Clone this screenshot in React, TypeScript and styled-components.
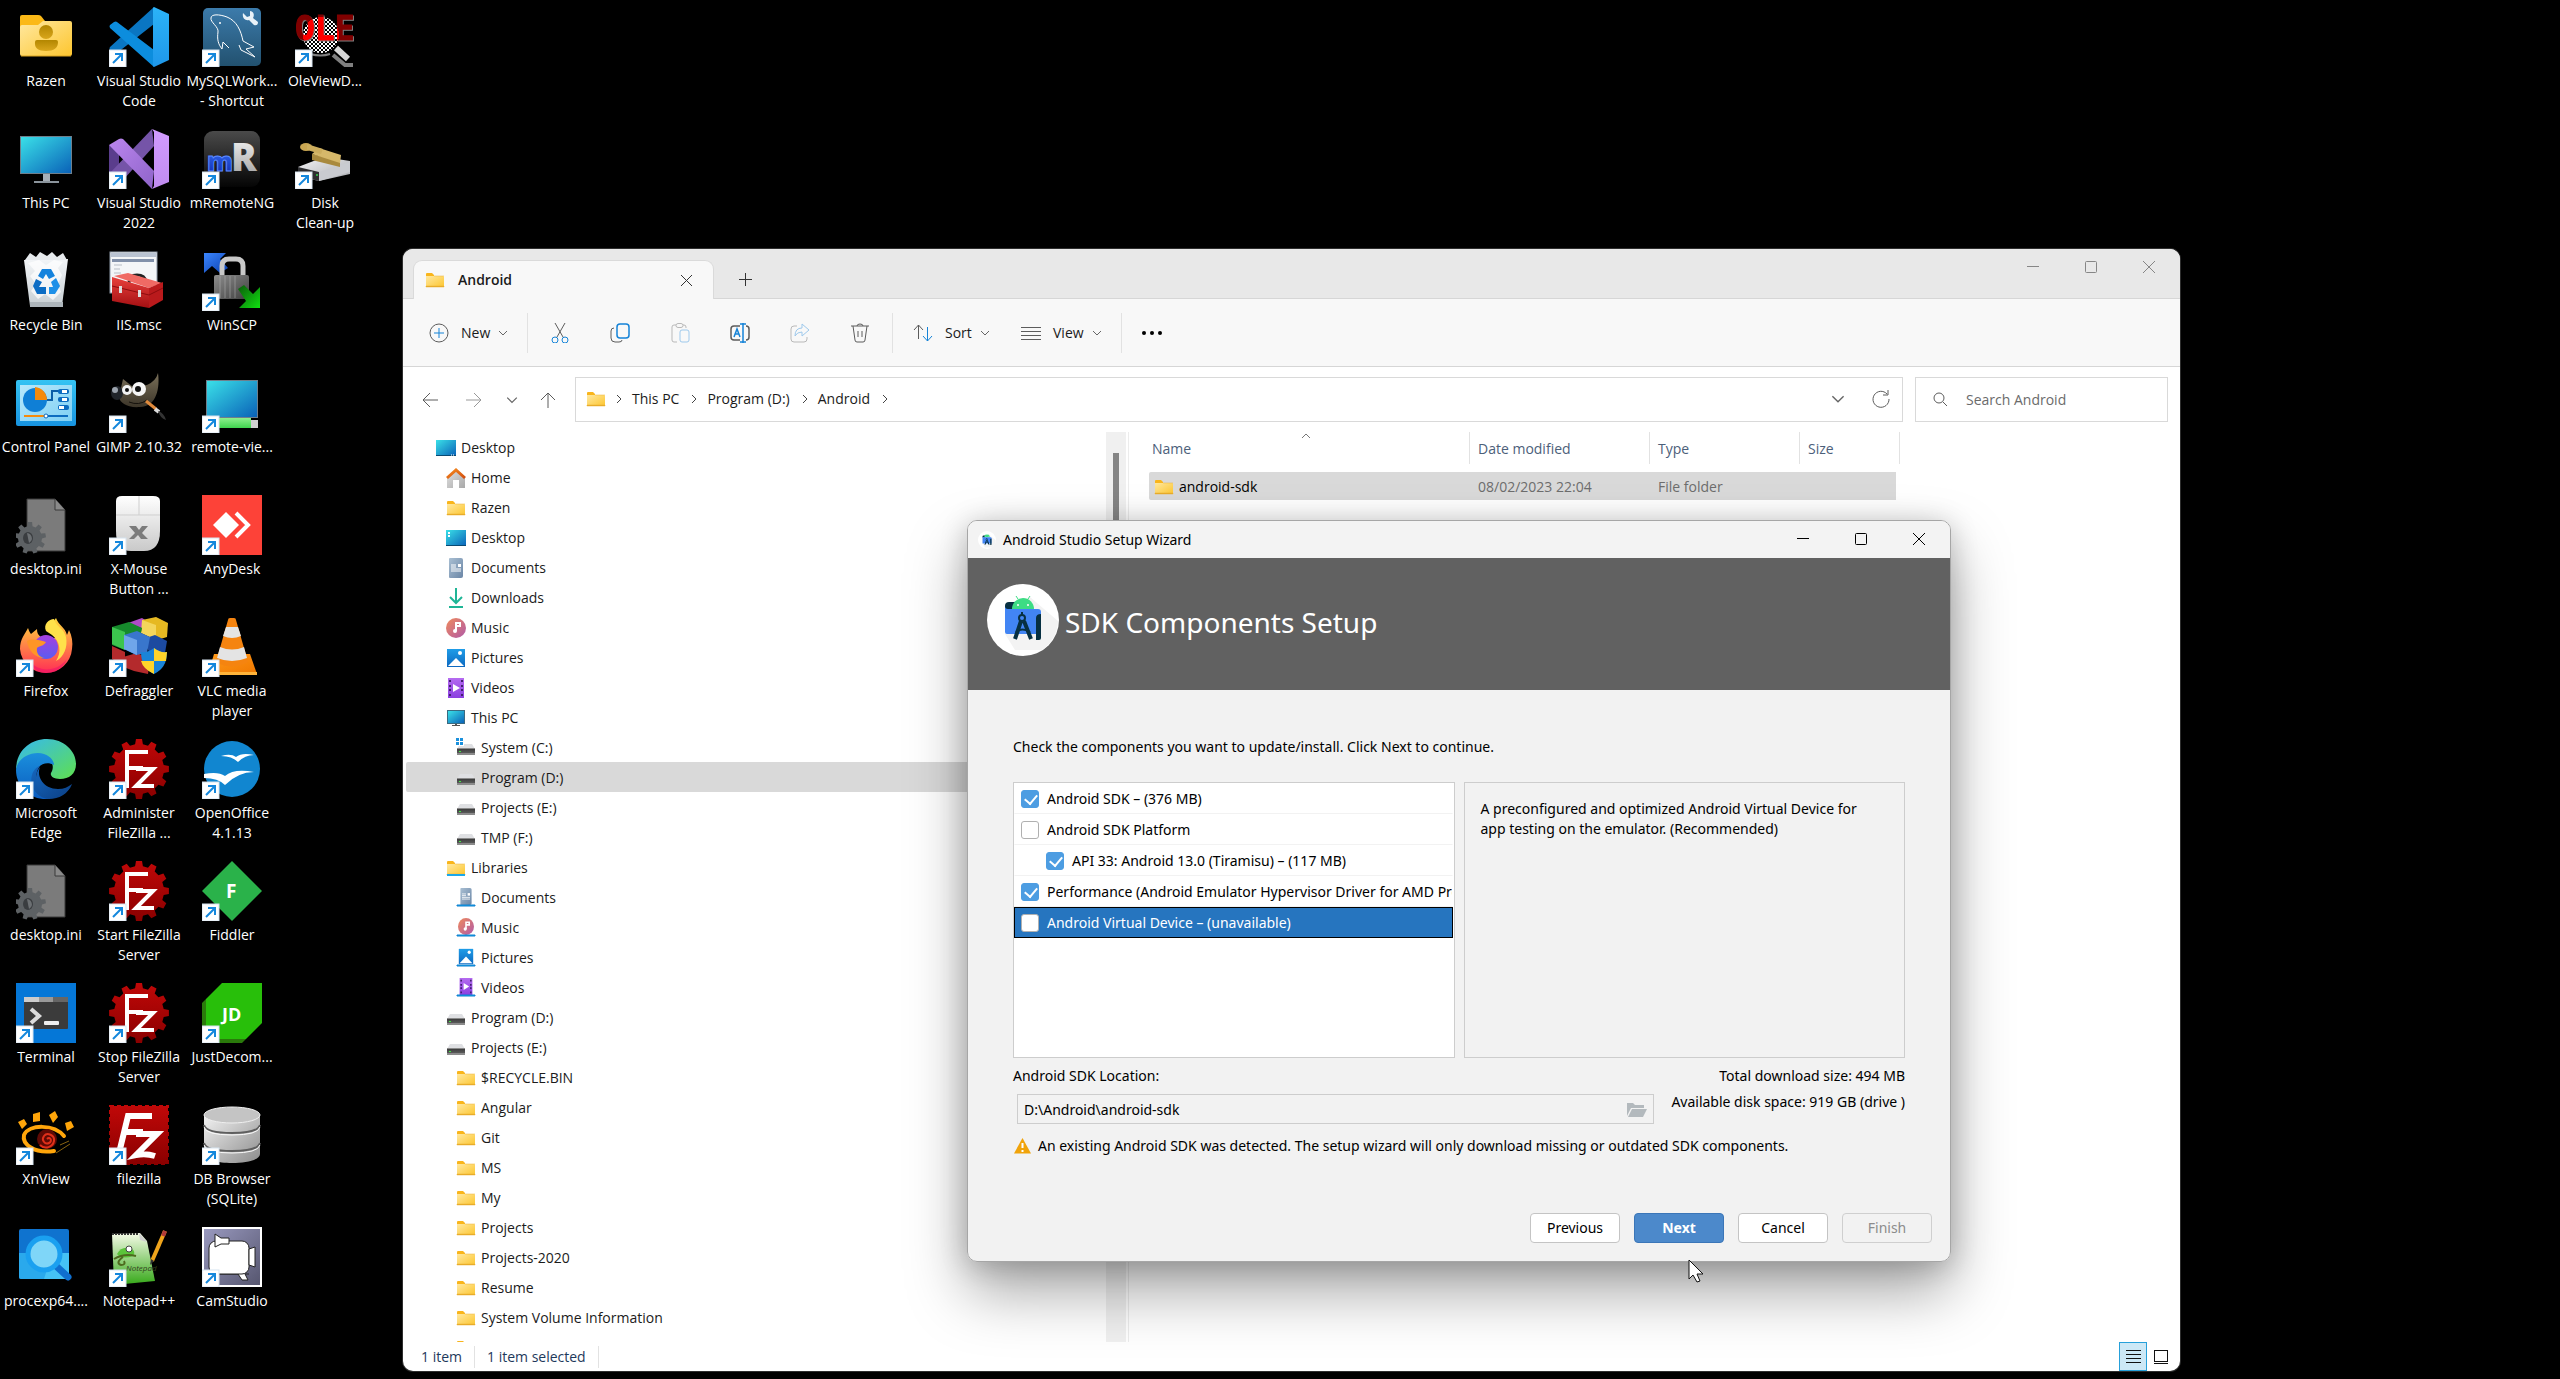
import React from "react";
import styled, { createGlobalStyle } from "styled-components";

const Global = createGlobalStyle`
  * { box-sizing: border-box; }
  body { margin: 0; background: #000; overflow: hidden; }
  body, button, input, table { font-family: "Open Sans", "Noto Sans", sans-serif; font-size: 14px; line-height: 20px; }
  button { border: 0; padding: 0; background: none; color: inherit; }
  ul { list-style: none; margin: 0; padding: 0; }
  svg { display: block; flex: none; }
`;

/* ---------- shared gradients ---------- */

const SharedDefs = styled.svg`
  position: absolute;
  width: 0;
  height: 0;
`;

const GRADIENTS: [string, string, string, boolean?][] = [
  ["gFolder", "#ffe8a0", "#fdc62f"],
  ["gScreen", "#3ae0e8", "#0a62b8"],
  ["gPerson", "#b38600", "#d9a61c", true],
  ["gCodeR", "#2bb3f8", "#1f97ea", true],
  ["gVsR", "#d29bff", "#c08cf0", true],
  ["gVsF", "#bb86ee", "#8e63c9"],
  ["gSql", "#3c7bab", "#22516f", true],
  ["gBlack", "#4a4a4a", "#050505", true],
  ["gSilver", "#ffffff", "#9a9a9a", true],
  ["gBlueM", "#3b78ff", "#0a24a8", true],
  ["gDrive", "#f4f4f6", "#a9abb0"],
  ["gBin", "#f2f5f7", "#c9d0d5", true],
  ["gRed", "#e8403c", "#a30f12", true],
  ["gMetal", "#8d8d8d", "#3f3f3f"],
  ["gGreenArrow", "#0b5a0b", "#10e010"],
  ["gBlueArrow", "#3b86ff", "#0a3fae"],
  ["gPanel", "#35c3f3", "#1793e0", true],
  ["gPanelIn", "#b8e8fb", "#7fd0f4"],
  ["gGimp", "#7a7059", "#3c3529", true],
  ["gGreenBar", "#8df08d", "#3fd34e", true],
  ["gMouse", "#ffffff", "#c9c9c9", true],
  ["gFox", "#ffd83a", "#ff2d55", true],
  ["gFoxIn", "#a53fe0", "#5a5cf0", true],
  ["gCone", "#ff9a1a", "#f07800"],
  ["gEdgeTop", "#35b8f2", "#5fe04e"],
  ["gEdgeMid", "#1b8fdc", "#0a5cc0", true],
  ["gEdgeLow", "#1666bd", "#0b3f85"],
  ["gFz", "#c00808", "#8a0000", true],
  ["gNpp", "#f6fbe8", "#35a818", true],
  ["gCam", "#9a9ac0", "#55556e"],
  ["gDb", "#f2f2f2", "#8c8c8c"],
  ["gDoc", "#a9bfd3", "#6b86a6"],
  ["gDown", "#2fcf8f", "#12a0a8", true],
  ["gMusic", "#f08a5c", "#b05aa8"],
  ["gPic", "#1f9de8", "#0d68c0", true],
  ["gVideo", "#b56bf0", "#8a3fe0", true],
  ["gRoof", "#f58a1f", "#d14e10"],
  ["gHouse", "#e2e2e2", "#a8a8a8"],
  ["gHdd", "#3c3c3c", "#5a5a5a", true],
];

const Defs = () => (
  <SharedDefs aria-hidden="true">
    <defs>
      {GRADIENTS.map(([id, a, b, vertical]) => (
        <linearGradient key={id} id={id} x1="0" y1="0" x2={vertical ? "0" : "1"} y2="1">
          <stop offset="0" stopColor={a} />
          <stop offset="1" stopColor={b} />
        </linearGradient>
      ))}
      <pattern id="checker" width="4" height="4" patternUnits="userSpaceOnUse">
        <rect width="4" height="4" fill="#fff" />
        <rect width="2" height="2" fill="#000" />
        <rect x="2" y="2" width="2" height="2" fill="#000" />
      </pattern>
      <radialGradient id="oleFill" gradientUnits="userSpaceOnUse" cx="26" cy="28" r="18">
        <stop offset="1" stopColor="#f00" />
        <stop offset="1" stopColor="#800000" />
      </radialGradient>
    </defs>
  </SharedDefs>
);

/* ---------- desktop icon drawings, 60 x 60 ---------- */

const logoFont = '"Open Sans", sans-serif';

const gearPath = (cx: number, cy: number, teeth: number, outer: number, inner: number) => {
  const step = (Math.PI * 2) / teeth;
  const pts: string[] = [];
  for (let i = 0; i < teeth; i++) {
    const a = i * step - Math.PI / 2;
    [
      [-0.3, inner],
      [-0.19, outer],
      [0.19, outer],
      [0.3, inner],
    ].forEach(([f, r]) => {
      pts.push(`${(cx + r * Math.cos(a + f * step)).toFixed(1)} ${(cy + r * Math.sin(a + f * step)).toFixed(1)}`);
    });
  }
  return `M${pts.join("L")}Z`;
};

const FzGear = (
  <>
    <path d={gearPath(30, 30, 12, 30, 25)} fill="url(#gFz)" />
    <path d="M18 49V13h21M18 29h16M27 30h17L27 47h18" fill="none" stroke="#fff" strokeWidth="4" />
  </>
);

const IniFile = (
  <>
    <path d="M11 4h28l10 11v41H11z" fill="#7b7b7b" stroke="#3a3a3a" />
    <path d="M39 4v11h10" fill="#8a8a8a" stroke="#3a3a3a" />
    <path d={gearPath(14, 43, 9, 16, 12)} fill="#5d6164" />
    <ellipse cx="12" cy="43" rx="5" ry="6" fill="#3a3d40" />
    <path d="M11 38a5 6 0 0 1 5 6 6 6 0 0 1-3 4z" fill="#6c7073" />
  </>
);

const ART: Record<string, React.ReactNode> = {
  user: (
    <>
      <path d="M4 10q0-2 2-2h16q2 0 3 1l4 5-4 6H4z" fill="#fbb917" />
      <path d="M4 20q0-2 2-2h16l5-4h27q2 0 2 2v31q0 2-2 2H6q-2 0-2-2z" fill="url(#gFolder)" />
      <path d="M5 49h50" stroke="#dca520" />
      <circle cx="30" cy="25" r="7" fill="url(#gPerson)" />
      <path d="M19 35q0-2 2-2h19q2 0 2 2 0 9-12 9t-11-9z" fill="url(#gPerson)" />
    </>
  ),
  pc: (
    <>
      <path d="M27 45h7v8h-7z" fill="#a7afb7" />
      <path d="M18 52h25v2H18z" fill="#8b949c" />
      <path d="M4 7h52v38H4z" fill="#6f7f8c" />
      <path d="M5 8h50v36H5z" fill="url(#gScreen)" />
    </>
  ),
  bin: (
    <>
      <path d="M8 9l44-1-6 47H14z" fill="url(#gBin)" />
      <path d="M9 9l5-7 6 4 4-5 7 4 5-4 5 5 6-4 4 7z" fill="#e6eaed" />
      <path d="M12 12l7 8-5 5 6 8-5 7 7 8 7-5 8 6 8-8-3-8 4-9-4-7 5-6-9-2-8 5-7-5z" fill="#fff" opacity=".7" />
      <path d="M14 51h33v5H14z" fill="#aeb6bc" />
      <path d="M22 25l4-7h9l4 7-6 3-3-5-3 5z" fill="#1583dd" />
      <path d="M40 27l4 8-5 8h-6v-7h4l-2-5z" fill="#1e90e8" />
      <path d="M30 43H21l-4-8 3-7 6 3-3 5h7z" fill="#0b6cc4" />
    </>
  ),
  control: (
    <>
      <rect y="7" width="60" height="46" rx="2" fill="url(#gPanel)" />
      <rect x="4" y="12" width="52" height="36" fill="url(#gPanelIn)" />
      <circle cx="19" cy="27" r="12" fill="#0f7fd6" />
      <path d="M19 27V14a13 13 0 0 1 12 13z" fill="#f58a0b" />
      <path d="M31 27h5v-9h7" fill="none" stroke="#0c5ea8" strokeWidth="2" />
      <rect x="42" y="16" width="11" height="5" rx="2" fill="#0c6cc0" />
      <rect x="42" y="24" width="11" height="5" rx="2" fill="#0c6cc0" />
      <rect x="42" y="32" width="11" height="5" rx="2" fill="#0c6cc0" />
      <path d="M46 17h5v3h-5zM46 25h5v3h-5zM43 33h5v3h-5z" fill="#fff" />
      <path d="M8 43h22" stroke="#f58a0b" strokeWidth="2" />
      <path d="M30 43h22" stroke="#0c6cc0" strokeWidth="2" />
      <circle cx="30" cy="43" r="2" fill="#fff" stroke="#0c6cc0" />
    </>
  ),
  ini: IniFile,
  firefox: (
    <>
      <path d="M4 32C4 22 9 17 12 11c1 3 2 5 3 6l6-5c0 4 1 6 4 8 4 0 5 3 4 6l13-7c-6-6-8-11-2-18 3 8 9 9 11 17l2-5c3 6 4 12 3 19a26 26 0 0 1-26 24A26 26 0 0 1 4 32z" fill="url(#gFox)" />
      <path d="M30 14c-3-7 3-12 8-12 2 8 10 9 12 18 2 10-2 20-10 24 6-9 4-20-4-26z" fill="#ffe14a" />
      <path d="M13 42c8 14 27 14 38 0-4 10-13 14-21 14s-14-5-17-14z" fill="#f0146a" opacity=".6" />
      <circle cx="30" cy="30" r="12" fill="url(#gFoxIn)" />
      <path d="M11 24c6-3 12-1 19 1-2 4-7 4-9 6-1 6 3 9 7 10-9 0-16-8-17-17z" fill="#ff9526" />
    </>
  ),
  edge: (
    <>
      <path d="M0 31C0 12 14 0 31 0c17 0 29 12 29 25 0 10-7 15-16 15-7 0-10-3-9-6 5-8-1-17-12-17C10 17 2 24 0 31z" fill="url(#gEdgeTop)" />
      <path d="M0 31c1-10 11-17 22-17 9 0 16 6 16 12-9-5-19 1-19 12 0 10 7 19 15 22C15 62 0 48 0 31z" fill="url(#gEdgeMid)" />
      <path d="M24 27c-8 10-2 28 11 29 10 0 17-4 21-11-4 10-13 15-23 15-14-1-20-15-17-24 1-4 4-8 8-9z" fill="url(#gEdgeLow)" />
      <path d="M24 28c-4 10 4 22 18 22 6 0 10-2 14-5-4 9-12 14-22 13-14-2-18-20-10-30z" fill="url(#gEdgeLow)" />
    </>
  ),
  terminal: (
    <>
      <rect width="60" height="60" fill="#0577d7" />
      <rect x="8" y="14" width="44" height="32" rx="1" fill="#3b3b3b" />
      <path d="M8 14h15v5H8z" fill="#ccc" />
      <path d="M23 14h14v5H23z" fill="#999" />
      <path d="M37 14h15v5H37z" fill="#666" />
      <path d="M15 26l8 7-8 7" fill="none" stroke="#ddd" strokeWidth="4" />
      <rect x="28" y="38" width="15" height="4" rx="1" fill="#eee" />
    </>
  ),
  xnview: (
    <>
      <path d="M8 30c-2 9 10 19 30 16M8 30c5-11 30-11 40 1" fill="none" stroke="#ffa50a" strokeWidth="4" strokeLinecap="round" />
      <path d="M40 48l14-9M44 40l9-4" fill="none" stroke="#8a6410" />
      <circle cx="31" cy="34" r="10" fill="#5e0a05" />
      <path d="M31 34c3-3 6 2 2 4s-8-3-5-7 11-1 10 5-9 9-14 4" fill="none" stroke="#e0301a" strokeWidth="2" />
      <path d="M2 17l6-3 3 5-5 5zM17 9l7-2v9l-7 1zM33 10l6-4 3 6-5 6zM49 18l6-2 3 6-7 4z" fill="#ffa50a" />
    </>
  ),
  procexp: (
    <>
      <rect x="3" y="2" width="50" height="50" rx="2" fill="#0f73cf" />
      <path d="M3 26h50v24q0 2-2 2H5q-2 0-2-2z" fill="#2aa9ec" />
      <path d="M36 26h17v26H28z" fill="#45c2f5" />
      <path d="M39 38l13 12" stroke="#0f6fcf" strokeWidth="7" strokeLinecap="round" />
      <circle cx="28" cy="27" r="16" fill="#7fd6f8" stroke="#1aa0f0" strokeWidth="5" />
    </>
  ),
  vscode: (
    <>
      <path d="M45 0L1 40q-1 1 0 3l4 3q2 1 3 0l37-29z" fill="#0a76c2" />
      <path d="M45 60L1 21q-1-2 0-3l4-3q2-1 3 0l37 28z" fill="#0c8ddd" />
      <path d="M44 1l1-1 15 7v46l-15 7-1-1z" fill="url(#gCodeR)" />
    </>
  ),
  vs: (
    <>
      <path d="M0 16l10 6v17l-10 6z" fill="#5a3d8c" />
      <path d="M43 0L0 45l10 6q2 1 4 0l31-34z" fill="#7554a8" />
      <path d="M0 16l10-6q2-1 4 0l31 32-2 18z" fill="url(#gVsF)" />
      <path d="M43 0l17 7v46l-17 7 2-3V3z" fill="url(#gVsR)" />
    </>
  ),
  iis: (
    <>
      <rect x="1" y="1" width="47" height="41" fill="#f4f6f8" stroke="#8e99a8" />
      <path d="M2 2h45v4H2z" fill="#b9c3d2" />
      <path d="M3 8h42v3H3z" fill="#8291aa" />
      <path d="M5 14h8M5 18h6M5 22h7" stroke="#b8bec6" />
      <path d="M20 32q0-8 8-8t9 7" fill="none" stroke="#222" strokeWidth="3" />
      <path d="M5 25l14-3 34 10-13 5z" fill="#f06a64" />
      <path d="M3 26l37 11v20L3 50z" fill="url(#gRed)" />
      <path d="M40 37l14-6v18l-14 8z" fill="#b91a1c" />
      <path d="M3 35l37 9 14-7" fill="none" stroke="#8d0c0e" />
      <path d="M10 35h3v7h-3zM29 39h3v7h-3z" fill="#ddd" />
    </>
  ),
  gimp: (
    <>
      <path d="M14 6l10 8 14-2Q47 8 49 0c2 14-1 34-18 34C18 35 11 30 10 24z" fill="url(#gGimp)" />
      <ellipse cx="8" cy="20" rx="6" ry="7" fill="#20242a" />
      <ellipse cx="6" cy="17" rx="3" ry="3" fill="#9aa2ac" />
      <circle cx="18" cy="17" r="5" fill="#f2f2f2" />
      <circle cx="30" cy="16" r="7" fill="#f6f6f6" />
      <circle cx="18" cy="17" r="2" fill="#111" />
      <circle cx="29" cy="16" r="3" fill="#111" />
      <path d="M20 29q10 4 18-2" stroke="#14110c" fill="none" />
      <path d="M37 28l10 8" stroke="#e08a3c" strokeWidth="3" />
      <path d="M46 36l4 3" stroke="#ddd" strokeWidth="4" />
      <path d="M49 38q6 2 8 9-6-2-8-9z" fill="#333" />
    </>
  ),
  xmouse: (
    <>
      <path d="M7 6q0-5 6-5h31q7 0 7 5v30q0 20-16 20H22Q7 56 7 36z" fill="url(#gMouse)" />
      <path d="M7 20h44M30 1v19" stroke="#cfcfcf" />
      <path d="M20 31h7l3 4 3-4h6l-6 7 6 6h-7l-3-4-4 4h-5l6-6z" fill="#7b7b7b" />
    </>
  ),
  defrag: (
    <>
      <path d="M19 6l14-5 8 5-9 5z" fill="#b04cc8" />
      <path d="M33 3l14-3 12 6-1 14-10 3-15-7z" fill="#e6b922" />
      <path d="M33 3l14 5v15L32 16z" fill="#f4d65c" />
      <path d="M3 10l17-5 13 6-3 14-14 8L3 28z" fill="#168a2c" />
      <path d="M3 10l13 5v18L3 27z" fill="#3cc44e" />
      <path d="M34 22l12-4 12 6-2 12-14 3z" fill="#1c4aa0" />
      <path d="M3 29l13 6v14L3 42zM14 40l14-4 13 6-2 15-14-3-13-5z" fill="#b42a2c" />
      <path d="M15 18l13-4 13 6-3 16-11 2-12-6z" fill="#3976cc" />
      <path d="M15 18l13 5v15l-13-6z" fill="#6fa6ea" />
      <path d="M32 35q7 1 13-4 6 5 13 4 0 16-13 22-13-6-13-22z" fill="#1a84d8" />
      <path d="M45 31q6 5 13 4l-1 9H45zM32 44h13v13q-11-5-13-13z" fill="#ffd42a" />
    </>
  ),
  fz: FzGear,
  filezilla: (
    <>
      <rect x="1" y="1" width="58" height="58" fill="url(#gFz)" stroke="url(#gFz)" strokeWidth="3" strokeDasharray="4 3" />
      <path d="M11 44L19 11h24M15 27h19M27 29h21L27 50q10-2 19 1" fill="none" stroke="#fff" strokeWidth="6" />
    </>
  ),
  npp: (
    <>
      <path d="M3 7l28-1 7 8 8 40-41 4z" fill="url(#gNpp)" />
      <path d="M3 7h27" stroke="#333" strokeDasharray="2 1" strokeWidth="2" />
      <path d="M30 6l8 9-7-2z" fill="#cfcfcf" />
      <path d="M8 27q5-9 15-5 4 3 1 7-8 3-14 0z" fill="#5bc43a" />
      <circle cx="20" cy="22" r="3" fill="#fff" stroke="#444" />
      <path d="M5 32q10-6 22-3M14 30q-8 6-2 8 5 0 3-4" fill="none" stroke="#4d6a1e" strokeWidth="2" />
      <text x="17" y="44" fontFamily={logoFont} fontSize="8" fontStyle="italic" fill="#34401e">Notepad</text>
      <path d="M56 4L43 34" stroke="#f0a41c" strokeWidth="4" />
      <path d="M56 4l-2 5" stroke="#b03a3a" strokeWidth="4" />
      <path d="M42 32l-1 6 4-4z" fill="#333" />
    </>
  ),
  mysql: (
    <>
      <rect x="1" y="1" width="58" height="58" rx="5" fill="url(#gSql)" />
      <path d="M16 25c-1 7 0 12 4 17l1-7 6 6M16 25c1-5-8-10-7-14 0-4 8-4 16-1 10 4 14 14 16 24l11 6-8 2 9 8-14-7-2-5" fill="none" stroke="#fff" strokeWidth="1" strokeLinejoin="round" />
      <circle cx="18" cy="16" r="1" fill="#fff" />
      <path d="M41 6l4 4 3-1V4c5 1 4 5 3 7l5 4q0 4-4 3l-5-5c-4 1-7-2-6-7z" fill="#e9f2f8" />
    </>
  ),
  mremote: (
    <>
      <rect x="2" y="2" width="56" height="56" rx="9" fill="url(#gBlack)" />
      <text x="5" y="42" fontFamily={logoFont} fontSize="26" fontWeight="800" fill="url(#gBlueM)" stroke="#5c8aff" strokeWidth="1">m</text>
      <text x="29" y="42" fontFamily={logoFont} fontSize="38" fontWeight="800" fill="url(#gSilver)">R</text>
    </>
  ),
  winscp: (
    <>
      <path d="M2 2h22l-6 6 8 9-8 5-8-7-8 7z" fill="url(#gBlueArrow)" />
      <path d="M20 26V15q0-7 7-7h7q7 0 7 7v11" fill="none" stroke="#c8c8c8" strokeWidth="5" />
      <rect x="12" y="24" width="35" height="24" rx="2" fill="url(#gMetal)" />
      <path d="M18 25v22M23 25v22M28 25v22M33 25v22" stroke="#b5b5b5" opacity=".5" />
      <path d="M36 38l6-4 9 9 7-7v21H37l7-7z" fill="url(#gGreenArrow)" />
    </>
  ),
  remote: (
    <>
      <path d="M4 7h52v38H4z" fill="#6f7f8c" />
      <path d="M5 8h50v36H5z" fill="url(#gScreen)" />
      <path d="M12 45h37v10H12z" fill="url(#gGreenBar)" />
      <path d="M49 47h7v8h-7z" fill="#d0d0d0" />
    </>
  ),
  anydesk: (
    <>
      <rect width="60" height="60" fill="#fd4238" />
      <path d="M24 17l13 13-13 13-13-13z" fill="#fff" />
      <path d="M34 18l12 12-12 12" fill="none" stroke="#fff" strokeWidth="4" />
    </>
  ),
  vlc: (
    <>
      <path d="M12 37h36l7 20H6z" fill="url(#gCone)" />
      <path d="M6 55h49v3H6z" fill="#ffb43a" />
      <path d="M26 3q0-2 2-2h4q2 0 2 2l12 42q-16 9-32 0z" fill="#f58410" />
      <path d="M24 10h12l3 9q-9 4-18 0zM18 30q12 5 24 0l3 11q-15 6-30 0z" fill="#e4e4e4" />
    </>
  ),
  openoffice: (
    <>
      <circle cx="30" cy="30" r="28" fill="#1186d0" />
      <path d="M19 17q10-3 15 1 6-5 18-2-9 0-16 7-6-6-17-6zM2 35q14-3 21 2 9-8 29-4-16 0-29 13-7-7-21-7z" fill="#fff" />
    </>
  ),
  fiddler: (
    <>
      <path d="M30 0l30 30-30 30L0 30z" fill="#2ab24a" />
      <text x="24" y="37" fontFamily={logoFont} fontSize="19" fontWeight="700" fill="#fff">F</text>
    </>
  ),
  justdecompile: (
    <>
      <path d="M4 16L0 20v40h40l4-4z" fill="#2a7a0b" />
      <path d="M20 0h40v40L44 56H4V16z" fill="#28bf0a" />
      <text x="20" y="38" fontFamily={logoFont} fontSize="18" fontWeight="700" fill="#fff">JD</text>
    </>
  ),
  db: (
    <>
      <path d="M2 10v39c0 12 56 12 56 0V10z" fill="url(#gDb)" />
      <path d="M2 20q2 8 28 8t28-8M2 38q2 8 28 8t28-8" fill="none" stroke="#5e5e5e" strokeWidth="2" />
      <path d="M2 22q2 8 28 8t28-8M2 40q2 8 28 8t28-8" fill="none" stroke="#fafafa" />
      <ellipse cx="30" cy="10" rx="28" ry="8" fill="#c4c4c4" stroke="#efefef" />
    </>
  ),
  camstudio: (
    <>
      <rect x="1" y="1" width="58" height="58" fill="url(#gCam)" stroke="#fff" strokeWidth="2" />
      <path d="M12 47h24l4 6h6l-3-6h4M16 47l-7 6h8" fill="#fff" stroke="#222" />
      <rect x="7" y="14" width="40" height="33" rx="7" fill="#fff" stroke="#222" />
      <path d="M13 7l6 4h8v6h-8l-6 3zM47 22l6-2v20l-6-2z" fill="#fff" stroke="#222" />
    </>
  ),
  ole: (
    <>
      <circle cx="26" cy="28" r="18" fill="url(#checker)" />
      <text
        x="0"
        y="33"
        fontFamily='"DejaVu Sans Mono", monospace'
        fontSize="33"
        fontWeight="700"
        fill="url(#oleFill)"
        stroke="url(#oleFill)"
        strokeWidth="1"
        style={{ filter: "drop-shadow(1px 1px 0 #808080)" }}
      >
        OLE
      </text>
      <path d="M15 47q11 3 20 0" stroke="#808080" strokeWidth="2" fill="none" />
      <path d="M38 48l12 10h8" stroke="#808080" strokeWidth="4" fill="none" />
      <path d="M41 41l12 11" stroke="#d8d8d8" strokeWidth="6" />
    </>
  ),
  cleanup: (
    <>
      <path d="M3 38l26-10 26 4v13L24 52 3 47z" fill="url(#gDrive)" />
      <path d="M3 38l21 5v9L3 47z" fill="#2d2d30" />
      <path d="M24 43l31-10v10l-31 9z" fill="#c9cbd0" />
      <circle cx="22" cy="46" r="1" fill="#35d04a" />
      <path d="M17 25l28 7v6l-28-7z" fill="#a98a3e" />
      <path d="M17 25l7-6 22 7-1 8z" fill="#d6b86a" />
      <ellipse cx="11" cy="18" rx="6" ry="4" fill="#c9a652" />
      <path d="M12 15l16 5-2 5-14-4z" fill="#cdae5e" />
    </>
  ),
};

const Overlay = (
  <g>
    <rect x="0" y="43" width="17" height="17" fill="#fff" />
    <rect x="0" y="43" width="17" height="17" fill="none" stroke="#d5e3f0" />
    <path d="M4 56l8-8M6 47h7v7" fill="none" stroke="#1487dc" strokeWidth="2" />
  </g>
);

/* ---------- desktop ---------- */

const Desktop = styled.main`
  position: relative;
  min-height: 100vh;
  background: #000;
  overflow: hidden;
`;

const IconGrid = styled.ul`
  display: grid;
  grid-auto-flow: column;
  grid-template-rows: repeat(11, 122px);
  grid-auto-columns: 93px;
`;

const Shortcut = styled.button`
  width: 100%;
  height: 100%;
  padding: 7px 1px 0 0;
  display: flex;
  flex-direction: column;
  align-items: center;
  gap: 4px;
  color: #fff;
  text-align: center;
  white-space: pre;
`;

const SHORTCUTS: [string, string, boolean][] = [
  ["user", "Razen", false],
  ["pc", "This PC", false],
  ["bin", "Recycle Bin", false],
  ["control", "Control Panel", false],
  ["ini", "desktop.ini", false],
  ["firefox", "Firefox", true],
  ["edge", "Microsoft\nEdge", true],
  ["ini", "desktop.ini", false],
  ["terminal", "Terminal", true],
  ["xnview", "XnView", true],
  ["procexp", "procexp64....", false],
  ["vscode", "Visual Studio\nCode", true],
  ["vs", "Visual Studio\n2022", true],
  ["iis", "IIS.msc", false],
  ["gimp", "GIMP 2.10.32", true],
  ["xmouse", "X-Mouse\nButton ...", true],
  ["defrag", "Defraggler", true],
  ["fz", "Administer\nFileZilla ...", true],
  ["fz", "Start FileZilla\nServer", true],
  ["fz", "Stop FileZilla\nServer", true],
  ["filezilla", "filezilla", true],
  ["npp", "Notepad++", true],
  ["mysql", "MySQLWork...\n- Shortcut", true],
  ["mremote", "mRemoteNG", true],
  ["winscp", "WinSCP", true],
  ["remote", "remote-vie...", true],
  ["anydesk", "AnyDesk", true],
  ["vlc", "VLC media\nplayer", true],
  ["openoffice", "OpenOffice\n4.1.13", true],
  ["fiddler", "Fiddler", true],
  ["justdecompile", "JustDecom...", true],
  ["db", "DB Browser\n(SQLite)", true],
  ["camstudio", "CamStudio", true],
  ["ole", "OleViewD...", true],
  ["cleanup", "Disk\nClean-up", true],
];

const DesktopIcons = () => (
  <IconGrid>
    {SHORTCUTS.map(([art, label, linked], i) => (
      <li key={i}>
        <Shortcut type="button">
          <svg width="60" height="60" viewBox="0 0 60 60" aria-hidden="true">
            {ART[art]}
            {linked && Overlay}
          </svg>
          <span>{label}</span>
        </Shortcut>
      </li>
    ))}
  </IconGrid>
);

/* ---------- small icons, 20 x 20 ---------- */

const FolderShape = (
  <>
    <path d="M1 4q0-1 1-1h5l2 2v3H1z" fill="#f9b51c" />
    <path d="M1 6h17q1 0 1 1v9q0 1-1 1H2q-1 0-1-1z" fill="url(#gFolder)" />
    <path d="M9 6h10M1 16h18v1H1z" fill="#e6a91e" stroke="#e8b23a" strokeWidth=".5" />
  </>
);
const Drive = (
  <>
    <path d="M4 6h12l3 5H1z" fill="#dfe0e3" />
    <path d="M1 10h18v7H1z" fill="#8b8b8b" />
    <path d="M1 11h18v4H1z" fill="url(#gHdd)" />
    <path d="M3 13h2v1H3z" fill="#3ff03f" />
  </>
);
const LibraryLine = <path d="M1 17h18v1H1z" fill="#10bdf5" stroke="#0f7fd0" strokeWidth="1" />;
const Doc = (
  <>
    <path d="M4 0h11q2 0 2 2v16q0 2-2 2H4q-1 0-1-1V1q0-1 1-1z" fill="url(#gDoc)" />
    <path d="M5 7h5M5 9h5M5 11h10M5 13h10" stroke="#fff" />
    <path d="M12 6h3v3h-3z" fill="#fff" />
  </>
);
const Music = (
  <>
    <circle cx="10" cy="10" r="10" fill="url(#gMusic)" />
    <circle cx="9" cy="13" r="2" fill="#fff" />
    <path d="M10 13V5h4v3h-3" fill="none" stroke="#fff" strokeWidth="2" />
  </>
);
const Picture = (
  <>
    <path d="M1 1h18v18H1z" fill="url(#gPic)" />
    <path d="M2 18l8-8 8 8z" fill="#fff" />
    <circle cx="14" cy="5" r="2" fill="#fff" />
  </>
);
const Video = (
  <>
    <path d="M2 0h16v20H2z" fill="url(#gVideo)" />
    <path d="M3 2h2v2H3zM3 7h2v2H3zM3 11h2v2H3zM3 16h2v2H3zM15 2h2v2h-2zM15 7h2v2h-2zM15 11h2v2h-2zM15 16h2v2h-2z" fill="#43206f" />
    <path d="M7 6l7 4-7 4z" fill="#fff" />
  </>
);
const library = (art: React.ReactNode) => (
  <>
    <g transform="translate(2 0) scale(.8 .85)">{art}</g>
    {LibraryLine}
  </>
);

const SMALL: Record<string, React.ReactNode> = {
  folder: FolderShape,
  libraries: (
    <>
      {FolderShape}
      <path d="M1 16h18v2H1z" fill="#1ba8ea" />
    </>
  ),
  desktop: (
    <>
      <path d="M0 2h20v16H0z" fill="url(#gScreen)" />
      <path d="M0 17h20v1H0z" fill="#0a4a72" />
      <path d="M15 17h1M17 17h1" stroke="#fff" />
    </>
  ),
  desktopFolder: (
    <>
      <path d="M0 2h20v16H0z" fill="url(#gScreen)" />
      <path d="M0 17h20v1H0z" fill="#0a4a72" />
      <path d="M2 4h2v2H2zM2 7h2v2H2z" fill="#fff" />
    </>
  ),
  home: (
    <>
      <path d="M1 9l9-8 9 8v11h-6v-8H7v8H1z" fill="url(#gHouse)" />
      <path d="M1 10l9-8 9 8" fill="none" stroke="url(#gRoof)" strokeWidth="3" />
    </>
  ),
  documents: Doc,
  downloads: <path d="M10 0v15M4 9l6 6 6-6M3 19h14" fill="none" stroke="#1fb596" strokeWidth="2" />,
  music: Music,
  pictures: Picture,
  videos: Video,
  pc: (
    <>
      <path d="M1 2h18v14H1z" fill="#3a6a80" />
      <path d="M2 3h16v12H2z" fill="url(#gScreen)" />
      <path d="M9 16h2v1h3v1H6v-1h3z" fill="#555" />
    </>
  ),
  drive: Drive,
  system: (
    <>
      {Drive}
      <path d="M0 0h8v8H0z" fill="#fff" />
      <path d="M0 0h3v3H0zM4 0h3v3H4zM0 4h3v3H0zM4 4h3v3H4z" fill="#1a90dc" />
    </>
  ),
  libDocuments: library(Doc),
  libMusic: library(Music),
  libPictures: library(Picture),
  libVideos: library(Video),
};

const Small = ({ name }: { name: string }) => (
  <svg width="20" height="20" viewBox="0 0 20 20" aria-hidden="true">
    {SMALL[name]}
  </svg>
);

const LineIcon = ({ size = 20, color = "#5c5c5c", weight = 1, children }: { size?: number; color?: string; weight?: number; children: React.ReactNode }) => (
  <svg width={size} height={size} viewBox={`0 0 ${size} ${size}`} fill="none" stroke={color} strokeWidth={weight} aria-hidden="true">
    {children}
  </svg>
);

const ChevronDown = ({ size = 10 }: { size?: number }) => (
  <svg width={size} height={size} viewBox="0 0 10 10" fill="none" stroke="#666" aria-hidden="true">
    <path d="M1 3l4 4 4-4" />
  </svg>
);

/* ---------- explorer window ---------- */

const Explorer = styled.section`
  position: absolute;
  top: 249px;
  right: 380px;
  bottom: 8px;
  left: 403px;
  display: flex;
  flex-direction: column;
  overflow: hidden;
  border-radius: 10px;
  background: #fff;
  color: #1b1b1b;
  box-shadow: 0 0 0 1px #2e2e2e;
`;

const TabStrip = styled.header`
  display: flex;
  align-items: flex-end;
  height: 50px;
  padding-left: 10px;
  background: #e8e8e8;
  border-bottom: 1px solid #d6d6d6;
`;

const Tab = styled.div`
  display: flex;
  align-items: center;
  gap: 13px;
  width: 301px;
  height: 39px;
  margin-bottom: -1px;
  padding: 0 12px 0 11px;
  border: 1px solid #dadada;
  border-bottom: 0;
  border-radius: 9px 9px 0 0;
  background: #f8f8f8;
  font-weight: 600;
`;

const TabTitle = styled.span`
  flex: 1;
`;

const TabButton = styled.button`
  display: grid;
  place-items: center;
  width: 30px;
  height: 38px;
`;

const NewTab = styled(TabButton)`
  margin: 0 auto 0 16px;
`;

const Caption = styled.div`
  display: flex;
  align-self: flex-start;
  padding-right: 2px;
`;

const CaptionButton = styled.button`
  display: grid;
  place-items: center;
  width: 58px;
  height: 36px;
`;

const CaptionButtons = ({ color }: { color: string }) => (
  <Caption>
    <CaptionButton type="button" aria-label="Minimize">
      <LineIcon size={12} color={color}><path d="M0 5.500h12" /></LineIcon>
    </CaptionButton>
    <CaptionButton type="button" aria-label="Maximize">
      <LineIcon size={12} color={color}><rect x="0.500" y="0.500" width="11" height="11" rx="1" /></LineIcon>
    </CaptionButton>
    <CaptionButton type="button" aria-label="Close">
      <LineIcon size={12} color={color}><path d="M0 0l12 12M12 0L0 12" /></LineIcon>
    </CaptionButton>
  </Caption>
);

const CommandBar = styled.div`
  display: flex;
  align-items: center;
  height: 68px;
  padding-left: 26px;
  background: #f8f8f8;
  border-bottom: 1px solid #d6d6d6;
`;

const MenuButton = styled.button<{ $width: number }>`
  display: flex;
  align-items: center;
  gap: 8px;
  width: ${(p) => p.$width}px;
  height: 40px;
  & > svg:first-child { margin-right: 4px; }
`;

const ToolButton = styled.button`
  display: grid;
  place-items: center;
  width: 60px;
  height: 40px;
`;

const ToolGroup = styled.div`
  display: flex;
  padding: 0 2px;
`;

const MenuGroup = styled.div`
  display: flex;
  padding-left: 20px;
`;

const Rule = styled.span<{ $height: number }>`
  width: 1px;
  height: ${(p) => p.$height}px;
  background: #e2e2e2;
`;

const AddressRow = styled.div`
  display: flex;
  align-items: center;
  height: 65px;
  padding: 0 12px 0 5px;
`;

const NavButton = styled.button<{ $width: number }>`
  display: grid;
  place-items: center;
  width: ${(p) => p.$width}px;
  height: 44px;
`;

const AddressBox = styled.nav`
  display: flex;
  flex: 1;
  align-items: center;
  gap: 9px;
  height: 45px;
  margin: 0 12px 0 7px;
  padding: 0 0 2px 10px;
  border: 1px solid #d9d9d9;
`;

const Crumb = styled.button`
  padding-right: 2px;
`;

const AddressTools = styled.div`
  display: flex;
  margin-left: auto;
`;

const SearchBox = styled.label`
  display: flex;
  align-items: center;
  gap: 18px;
  width: 253px;
  height: 45px;
  padding-left: 17px;
  border: 1px solid #d9d9d9;
`;

const SearchInput = styled.input`
  flex: 1;
  min-width: 0;
  border: 0;
  padding: 0;
  outline: 0;
  background: none;
  &::placeholder { color: #6b6b6b; opacity: 1; }
`;

const Body = styled.div`
  display: flex;
  flex: 1;
  min-height: 0;
`;

const Tree = styled.ul`
  flex: 0 0 703px;
  padding: 0 3px;
  overflow: hidden;
`;

const TreeRow = styled.button<{ $level: number; $selected: boolean }>`
  display: flex;
  align-items: center;
  gap: 5px;
  width: 100%;
  height: 30px;
  padding: 2px 0 0 ${(p) => 30 + p.$level * 10}px;
  border-radius: 2px;
  background: ${(p) => (p.$selected ? "#d9d9d9" : "transparent")};
`;

const ScrollTrack = styled.div`
  flex: none;
  width: 20px;
  padding: 21px 7px 0;
  background: #f0f0f0;
`;

const ScrollThumb = styled.div`
  height: 320px;
  background: #858585;
`;

const Files = styled.div`
  flex: 1;
  margin-left: 2px;
  padding-left: 20px;
  border-left: 1px solid #ececec;
`;

const FileTable = styled.table`
  width: 751px;
  border-spacing: 0;
  table-layout: fixed;
`;

const HeadCell = styled.th<{ $width: number }>`
  width: ${(p) => p.$width}px;
  height: 40px;
  padding: 0;
  vertical-align: top;
  text-align: left;
  font-weight: 400;
`;

const SortButton = styled.button<{ $first?: boolean }>`
  position: relative;
  width: 100%;
  height: 32px;
  padding: 2px 0 0 ${(p) => (p.$first ? 3 : 8)}px;
  border-right: 1px solid #e2e2e2;
  color: #4c607a;
  text-align: left;
`;

const SortCaret = styled.svg`
  position: absolute;
  top: 1px;
  left: calc(50% - 8px);
`;

const Cell = styled.td`
  height: 28px;
  padding: 1px 8px 0;
  background: #d9d9d9;
  color: #6d6d6d;
  &:first-child { padding-left: 5px; border-radius: 2px 0 0 2px; color: #000; }
  &:last-child { border-right: 4px solid #fff; }
`;

const FileName = styled.span`
  display: flex;
  align-items: center;
  gap: 5px;
`;

const StatusBar = styled.footer`
  display: flex;
  align-items: center;
  gap: 12px;
  height: 29px;
  padding: 0 5px 0 18px;
  color: #1e395b;
`;

const ViewModes = styled.div`
  display: flex;
  margin-left: auto;
`;

const ViewMode = styled.button<{ $on?: boolean }>`
  display: grid;
  place-items: center;
  width: 28px;
  height: 29px;
  border: 1px solid ${(p) => (p.$on ? "#26a0da" : "transparent")};
  background: ${(p) => (p.$on ? "#cce8f6" : "transparent")};
`;

const TREE: [string, string, number][] = [
  ["desktop", "Desktop", 0],
  ["home", "Home", 1],
  ["folder", "Razen", 1],
  ["desktopFolder", "Desktop", 1],
  ["documents", "Documents", 1],
  ["downloads", "Downloads", 1],
  ["music", "Music", 1],
  ["pictures", "Pictures", 1],
  ["videos", "Videos", 1],
  ["pc", "This PC", 1],
  ["system", "System (C:)", 2],
  ["drive", "Program (D:)", 2],
  ["drive", "Projects (E:)", 2],
  ["drive", "TMP (F:)", 2],
  ["libraries", "Libraries", 1],
  ["libDocuments", "Documents", 2],
  ["libMusic", "Music", 2],
  ["libPictures", "Pictures", 2],
  ["libVideos", "Videos", 2],
  ["drive", "Program (D:)", 1],
  ["drive", "Projects (E:)", 1],
  ["folder", "$RECYCLE.BIN", 2],
  ["folder", "Angular", 2],
  ["folder", "Git", 2],
  ["folder", "MS", 2],
  ["folder", "My", 2],
  ["folder", "Projects", 2],
  ["folder", "Projects-2020", 2],
  ["folder", "Resume", 2],
  ["folder", "System Volume Information", 2],
  ["folder", "", 2],
];
const SELECTED_ROW = 11;

const blue = "#1583d7";

const TOOLS: [string, React.ReactNode][] = [
  ["Cut", <LineIcon key="i"><path d="M5 0l8 14M15 0L7 14" /><circle cx="5" cy="17" r="3" stroke={blue} /><circle cx="15" cy="17" r="3" stroke={blue} /></LineIcon>],
  ["Copy", <LineIcon key="i"><path d="M4 5q-3 0-3 3v7q0 4 4 4h4q3 0 3-2" /><rect x="7" y="1" width="12" height="14" rx="3" stroke={blue} strokeWidth="1.500" /></LineIcon>],
  ["Paste", <LineIcon key="i" color="#b9b9b9"><path d="M7 19H4q-2 0-2-2V4q0-2 2-2h2M13 2h1q2 0 2 2v1" /><rect x="6" y="0.500" width="7" height="4" rx="2" /><rect x="10" y="7" width="9" height="12" rx="2" stroke="#9ec9ec" /></LineIcon>],
  ["Rename", <LineIcon key="i" weight={1.5}><path d="M10 3H4Q1 3 1 6v8q0 3 3 3h6M16 3q3 0 3 3v8q0 3-3 3" /><path d="M4 14L7 6l3 8M5 11h4" stroke={blue} /><path d="M13 0v20M10 1h6M10 19h6" stroke={blue} /></LineIcon>],
  ["Share", <LineIcon key="i" color="#b9b9b9"><path d="M7 3H4Q1 3 1 6v10q0 3 3 3h10q3 0 3-3v-2" /><path d="M12 1l7 6-7 6V9q-5 0-7 4 0-8 7-8z" stroke="#9ec9ec" /></LineIcon>],
  ["Delete", <LineIcon key="i"><path d="M1 3h18M7 3q0-2 3-2t3 2M3 3l2 14q0 2 2 2h6q2 0 2-2l2-14M8 8v6M12 8v6" /></LineIcon>],
];

const Separator = () => (
  <svg width="8" height="10" viewBox="0 0 8 10" fill="none" stroke="#444" strokeWidth="1" aria-hidden="true">
    <path d="M2 1l4 4-4 4" />
  </svg>
);

const ExplorerWindow = () => (
  <Explorer aria-label="Android">
    <TabStrip>
      <Tab>
        <Small name="folder" />
        <TabTitle>Android</TabTitle>
        <TabButton type="button" aria-label="Close tab">
          <LineIcon size={11} color="#333"><path d="M0 0l11 11M11 0L0 11" /></LineIcon>
        </TabButton>
      </Tab>
      <NewTab type="button" aria-label="New tab">
        <LineIcon size={13} color="#333"><path d="M6.500 0v13M0 6.500h13" /></LineIcon>
      </NewTab>
      <CaptionButtons color="#868686" />
    </TabStrip>

    <CommandBar>
      <MenuButton type="button" $width={98}>
        <LineIcon><circle cx="10" cy="10" r="9" /><path d="M10 5v10M5 10h10" stroke={blue} /></LineIcon>
        New
        <ChevronDown />
      </MenuButton>
      <Rule $height={40} />
      <ToolGroup>
        {TOOLS.map(([label, icon]) => (
          <ToolButton key={label} type="button" aria-label={label}>{icon}</ToolButton>
        ))}
      </ToolGroup>
      <Rule $height={40} />
      <MenuGroup>
        <MenuButton type="button" $width={108}>
          <LineIcon><path d="M5.500 2v14M1 7l4.500-5L10 7" /><path d="M14.500 4v14M10 13l4.500 5 4.500-5" stroke={blue} /></LineIcon>
          Sort
          <ChevronDown />
        </MenuButton>
        <MenuButton type="button" $width={100}>
          <LineIcon><path d="M0 4.500h20M0 8.500h20M0 12.500h20M0 16.500h20" /></LineIcon>
          View
          <ChevronDown />
        </MenuButton>
      </MenuGroup>
      <Rule $height={40} />
      <ToolButton type="button" aria-label="See more">
        <svg width="20" height="4" viewBox="0 0 20 4" aria-hidden="true">
          <circle cx="2" cy="2" r="2" /><circle cx="10" cy="2" r="2" /><circle cx="18" cy="2" r="2" />
        </svg>
      </ToolButton>
    </CommandBar>

    <AddressRow>
      <NavButton type="button" $width={44} aria-label="Back">
        <LineIcon size={16}><path d="M1 8h15M8 1L1 8l7 7" /></LineIcon>
      </NavButton>
      <NavButton type="button" $width={44} aria-label="Forward">
        <LineIcon size={16} color="#999"><path d="M0 8h15M8 1l7 7-7 7" /></LineIcon>
      </NavButton>
      <NavButton type="button" $width={32} aria-label="Recent locations"><ChevronDown size={12} /></NavButton>
      <NavButton type="button" $width={40} aria-label="Up">
        <LineIcon size={16}><path d="M8 1v15M1 8l7-7 7 7" /></LineIcon>
      </NavButton>
      <AddressBox aria-label="Address">
        <Small name="folder" />
        <Separator />
        <Crumb type="button">This PC</Crumb>
        <Separator />
        <Crumb type="button">Program (D:)</Crumb>
        <Separator />
        <Crumb type="button">Android</Crumb>
        <Separator />
        <AddressTools>
          <NavButton type="button" $width={43} aria-label="Previous locations"><ChevronDown size={14} /></NavButton>
          <NavButton type="button" $width={43} aria-label="Refresh">
            <LineIcon size={18}><path d="M15 4a8 8 0 1 0 2 5M16 0v5h-5" /></LineIcon>
          </NavButton>
        </AddressTools>
      </AddressBox>
      <SearchBox>
        <LineIcon size={15}><circle cx="6" cy="6" r="5" /><path d="M10 10l4 4" /></LineIcon>
        <SearchInput type="text" placeholder="Search Android" aria-label="Search Android" />
      </SearchBox>
    </AddressRow>

    <Body>
      <Tree>
        {TREE.map(([icon, label, level], i) => (
          <li key={i}>
            <TreeRow type="button" $level={level} $selected={i === SELECTED_ROW}>
              <Small name={icon} />
              {label}
            </TreeRow>
          </li>
        ))}
      </Tree>
      <ScrollTrack><ScrollThumb /></ScrollTrack>
      <Files>
        <FileTable>
          <thead>
            <tr>
              <HeadCell $width={321}>
                <SortButton type="button" $first>
                  Name
                  <SortCaret width="10" height="6" viewBox="0 0 10 6" fill="none" stroke="#777"><path d="M1 5l4-4 4 4" /></SortCaret>
                </SortButton>
              </HeadCell>
              <HeadCell $width={180}><SortButton type="button">Date modified</SortButton></HeadCell>
              <HeadCell $width={150}><SortButton type="button">Type</SortButton></HeadCell>
              <HeadCell $width={100}><SortButton type="button">Size</SortButton></HeadCell>
            </tr>
          </thead>
          <tbody>
            <tr>
              <Cell><FileName><Small name="folder" />android-sdk</FileName></Cell>
              <Cell>08/02/2023 22:04</Cell>
              <Cell>File folder</Cell>
              <Cell />
            </tr>
          </tbody>
        </FileTable>
      </Files>
    </Body>

    <StatusBar>
      <span>1 item</span>
      <Rule $height={22} />
      <span>1 item selected</span>
      <Rule $height={22} />
      <ViewModes>
        <ViewMode type="button" $on aria-label="Details view">
          <LineIcon size={15} color="#111"><path d="M0 1.500h15M0 5.500h15M0 9.500h15M0 13.500h15" /></LineIcon>
        </ViewMode>
        <ViewMode type="button" aria-label="Large icons view">
          <LineIcon size={16} color="#111"><rect x="1.500" y="1.500" width="13" height="11" /><path d="M1 14.500h14" /></LineIcon>
        </ViewMode>
      </ViewModes>
    </StatusBar>
  </Explorer>
);

/* ---------- setup wizard ---------- */

const Wizard = styled.section`
  position: absolute;
  top: 520px;
  right: 609px;
  left: 967px;
  overflow: hidden;
  border: 1px solid #a6a6a6;
  border-radius: 10px;
  background: #f2f2f2;
  color: #000;
  &, button, input { font-family: "Noto Sans", "Open Sans", sans-serif; }
`;

const WizardShadow = styled.div`
  position: absolute;
  top: 249px;
  right: 380px;
  bottom: 8px;
  left: 403px;
  overflow: hidden;
  border-radius: 10px;
  pointer-events: none;
  &::before {
    content: "";
    position: absolute;
    top: 271px;
    right: 229px;
    bottom: 109px;
    left: 564px;
    border-radius: 10px;
    box-shadow: 0 30px 60px rgba(0, 0, 0, 0.35), 0 3px 28px rgba(0, 0, 0, 0.2);
  }
`;

const TitleBar = styled.header`
  display: flex;
  align-items: center;
  gap: 7px;
  height: 37px;
  padding-left: 10px;
  background: #f3f3f3;
`;

const TitleText = styled.span`
  flex: 1;
`;

const Banner = styled.div`
  display: flex;
  align-items: center;
  gap: 6px;
  height: 132px;
  padding: 0 19px 8px;
  background: #616161;
  color: #fff;
`;

const BannerTitle = styled.h1`
  margin: 0;
  padding-top: 4px;
  font-size: 28px;
  line-height: 40px;
  font-weight: 400;
`;

const WizardBody = styled.div`
  padding: 47px 45px 0;
`;

const Intro = styled.p`
  margin: 0 0 25px;
`;

const Panes = styled.div`
  display: grid;
  grid-template-columns: 1fr 1fr;
  gap: 9px;
  height: 276px;
`;

const ComponentList = styled.ul`
  padding: 0 1px 0 0;
  overflow: hidden;
  border: 1px solid #cdcdcd;
  background: #fff;
`;

const ComponentRow = styled.label<{ $indent?: boolean; $selected?: boolean }>`
  display: flex;
  align-items: center;
  gap: 8px;
  height: 31px;
  padding-left: ${(p) => (p.$indent ? 31 : 6)}px;
  overflow: hidden;
  white-space: nowrap;
  border: 1px solid transparent;
  border-bottom-color: #f2f2f2;
  ${(p) => p.$selected && "border-color: #000; background: #2675bf; color: #fff;"}
`;

const Tick = styled.input`
  appearance: none;
  flex: none;
  width: 18px;
  height: 18px;
  margin: 0;
  border: 1px solid #b0b0b0;
  border-radius: 3px;
  background: #fff;
  &:checked {
    border-color: #4d9de2;
    background: #4d9de2;
  }
  &:checked::before {
    content: "";
    display: block;
    width: 6px;
    height: 10px;
    margin: 1px 0 0 5px;
    border: solid #fff;
    border-width: 0 2px 2px 0;
    transform: rotate(40deg);
  }
`;

const Description = styled.div`
  padding: 16px 32px 16px 16px;
  border: 1px solid #cdcdcd;
`;

const Location = styled.div`
  display: flex;
  justify-content: space-between;
  gap: 17px;
  padding-top: 8px;
`;

const LocationField = styled.label`
  flex: 1;
`;

const FieldFrame = styled.span`
  display: flex;
  align-items: center;
  height: 30px;
  margin: 8px 0 0 4px;
  padding: 1px 6px 0;
  border: 1px solid #cdcdcd;
`;

const PathInput = styled.input`
  flex: 1;
  border: 0;
  padding: 0;
  outline: 0;
  background: none;
  color: #000;
`;

const Sizes = styled.div`
  display: flex;
  flex-direction: column;
  gap: 6px;
  text-align: right;
  white-space: nowrap;
`;

const Warning = styled.p`
  display: flex;
  align-items: center;
  gap: 6px;
  margin: 12px 0 0;
`;

const Actions = styled.div`
  display: flex;
  justify-content: flex-end;
  gap: 14px;
  padding: 57px 18px 18px;
`;

const Action = styled.button<{ $primary?: boolean }>`
  width: 90px;
  height: 30px;
  border: 1px solid ${(p) => (p.$primary ? "#3b76b8" : "#c4c4c4")};
  border-radius: 4px;
  background: ${(p) => (p.$primary ? "#4c89cb" : "#fff")};
  color: ${(p) => (p.$primary ? "#fff" : "#000")};
  font-weight: ${(p) => (p.$primary ? 700 : 400)};
  &:disabled {
    border-color: #cfcfcf;
    background: #f2f2f2;
    color: #8c8c8c;
  }
`;

const StudioLogo = ({ size }: { size: number }) => (
  <svg width={size} height={size} viewBox="0 0 72 72" aria-hidden="true">
    <circle cx="36" cy="36" r="36" fill="#fff" />
    <path d="M43 13l28 24a36 36 0 0 1-16 29L28 66 18 50z" fill="#f3f3f3" />
    <path d="M18 22q0-4 4-4h7v8H18z" fill="#073042" />
    <path d="M25 25a11 11 0 0 1 22 0z" fill="#3ddc84" />
    <path d="M31 15l-2-3M41 15l2-3" stroke="#3ddc84" />
    <circle cx="31" cy="21" r="1" fill="#fff" />
    <circle cx="41" cy="21" r="1" fill="#fff" />
    <path d="M18 22q0 3 3 3h30q3 0 3 3v22H20q-2 0-2-2z" fill="#4285f4" />
    <path d="M49 34q0-4 5-4v24q0 2-2 2h-3z" fill="#073042" />
    <path d="M34 37l-6 18M37 37l7 18" stroke="#073042" strokeWidth="4" />
    <path d="M29 48q6-5 14 0" stroke="#073042" strokeWidth="2" fill="none" />
    <circle cx="35" cy="34" r="3" fill="#4285f4" stroke="#073042" strokeWidth="2" />
    <path d="M35 28v4" stroke="#073042" strokeWidth="2" />
  </svg>
);

const COMPONENTS = [
  { label: "Android SDK – (376 MB)", checked: true },
  { label: "Android SDK Platform", checked: false },
  { label: "API 33: Android 13.0 (Tiramisu) – (117 MB)", checked: true, indent: true },
  { label: "Performance (Android Emulator Hypervisor Driver for AMD Processors)", checked: true },
  { label: "Android Virtual Device – (unavailable)", checked: false, selected: true },
];

const SetupWizard = () => (
  <Wizard role="dialog" aria-label="Android Studio Setup Wizard">
    <TitleBar>
      <StudioLogo size={18} />
      <TitleText>Android Studio Setup Wizard</TitleText>
      <CaptionButtons color="#000" />
    </TitleBar>
    <Banner>
      <StudioLogo size={72} />
      <BannerTitle>SDK Components Setup</BannerTitle>
    </Banner>
    <WizardBody>
      <Intro>Check the components you want to update/install. Click Next to continue.</Intro>
      <Panes>
        <ComponentList>
          {COMPONENTS.map((c) => (
            <li key={c.label}>
              <ComponentRow $indent={c.indent} $selected={c.selected}>
                <Tick type="checkbox" defaultChecked={c.checked} />
                {c.label}
              </ComponentRow>
            </li>
          ))}
        </ComponentList>
        <Description>
          A preconfigured and optimized Android Virtual Device for app testing on the emulator. (Recommended)
        </Description>
      </Panes>
      <Location>
        <LocationField>
          Android SDK Location:
          <FieldFrame>
            <PathInput type="text" defaultValue="D:\Android\android-sdk" />
            <svg width="20" height="16" viewBox="0 0 20 16" aria-hidden="true">
              <path d="M0 1h6l2 2h9v3H4L0 14z" fill="#b3b9bd" />
              <path d="M5 7h15l-4 8H1z" fill="#b3b9bd" />
            </svg>
          </FieldFrame>
        </LocationField>
        <Sizes>
          <span>Total download size: 494 MB</span>
          <span>Available disk space: 919 GB (drive )</span>
        </Sizes>
      </Location>
      <Warning>
        <svg width="19" height="16" viewBox="0 0 19 16" aria-hidden="true">
          <path d="M9.500 0L18 15.500H1z" fill="#f0a30a" />
          <path d="M8.500 5h2v5h-2zM8.500 12h2v2h-2z" fill="#fff" />
        </svg>
        An existing Android SDK was detected. The setup wizard will only download missing or outdated SDK components.
      </Warning>
    </WizardBody>
    <Actions>
      <Action type="button">Previous</Action>
      <Action type="button" $primary>Next</Action>
      <Action type="button">Cancel</Action>
      <Action type="button" disabled>Finish</Action>
    </Actions>
  </Wizard>
);

const Pointer = styled.svg`
  position: absolute;
  top: 1259px;
  left: 1688px;
`;

export default function App() {
  return (
    <Desktop>
      <Global />
      <Defs />
      <DesktopIcons />
      <ExplorerWindow />
      <WizardShadow />
      <SetupWizard />
      <Pointer width="16" height="24" viewBox="0 0 16 24" aria-hidden="true">
        <path d="M1 1v19l4-4 4 7 3-1-3-7h6z" fill="#fff" stroke="#111" />
      </Pointer>
    </Desktop>
  );
}
